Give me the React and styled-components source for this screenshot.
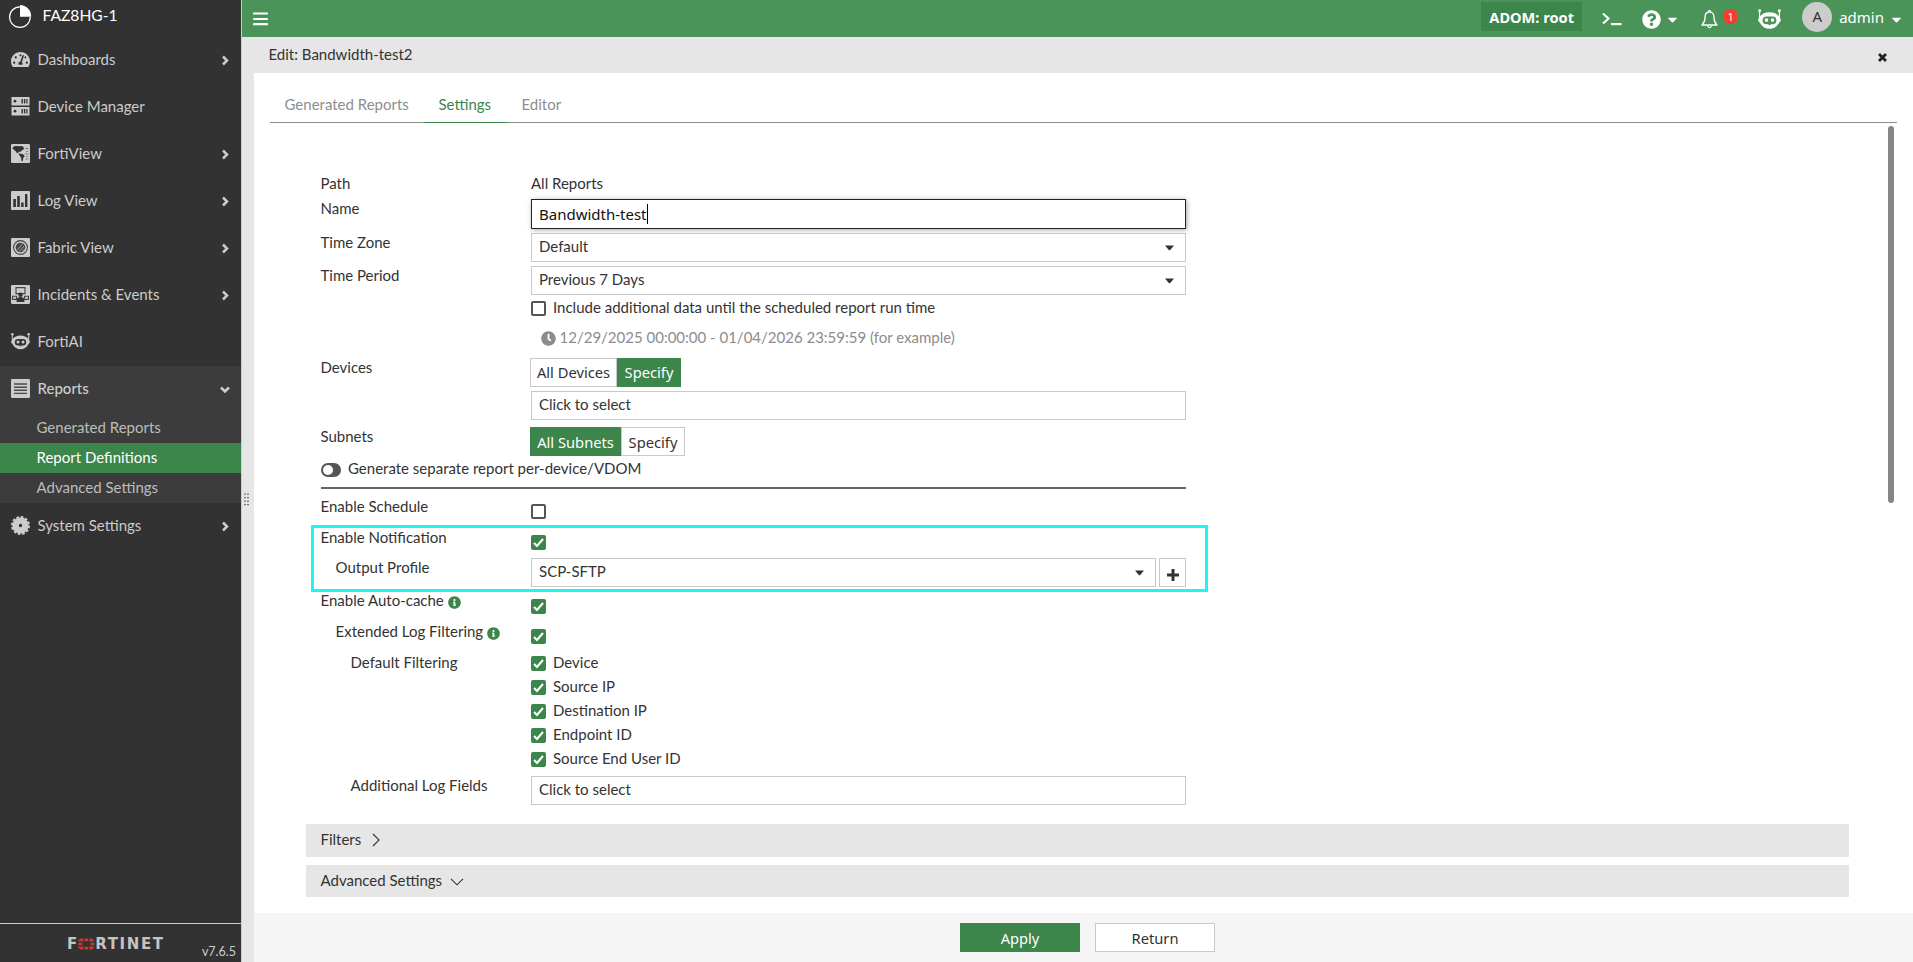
import React from 'react';
import styled, { createGlobalStyle } from 'styled-components';
import { FaTachometerAlt, FaQuestionCircle, FaCaretDown, FaClock, FaInfoCircle } from 'react-icons/fa';

const GlobalStyle = createGlobalStyle`
  *, *::after { box-sizing: border-box; }
  body {
    margin: 0;
    font-family: Lato, "Noto Sans", sans-serif;
    font-size: 15px;
    line-height: 20px;
    color: #333;
    background: #fff;
    overflow: hidden;
  }
  svg { display: block; flex: none; }
`
const Page = styled.div`
  display: flex;
  width: 1913px;
  height: 962px;
`
const Sidebar = styled.nav`
  display: flex;
  flex-direction: column;
  width: 242px;
  background: #323232;
  border-right: 1px solid #ccc;
  color: #ccc;
`
const Brand = styled.div`
  display: flex;
  height: 37px;
  padding: 5px 0 0 8px;
  color: #fff;
  font-size: 15.6px;
  gap: 10.5px;
`
const MenuGroup = styled.div`
  background: ${props => props.$open ? '#3c3c3c' : 'transparent'};
`
const MenuRow = styled.div`
  display: flex;
  align-items: center;
  height: 47px;
  padding: 0 11px 2px 11px;
  gap: 8px;
  font-weight: ${props => props.$open ? 500 : 400};
`
const MenuText = styled.span`
  flex: 1;
  margin: 0 0 2px -0.5px;
  white-space: nowrap;
`
const SubItem = styled.div`
  height: 30px;
  padding: 4px 0 0 36.5px;
  background: ${props => props.$active ? '#3c854b' : 'transparent'};
  color: ${props => props.$active ? '#fff' : '#bdbdbd'};
`
const SidebarFooter = styled.div`
  display: flex;
  align-items: flex-start;
  justify-content: space-between;
  height: 39px;
  margin-top: auto;
  padding: 12px 5px 0 67px;
  border-top: 1px solid #ccc;
  font-size: 12.5px;
`
const Logo = styled.div`
  display: flex;
  align-items: center;
  height: 16px;
  font: bold 15px/16px "DejaVu Sans", sans-serif;
  color: #c4c4c4;
`
const LogoTail = styled.span`
  letter-spacing: 1.6px;
`
const Version = styled.span`
  margin-top: 6px;
`
const Splitter = styled.div`
  display: flex;
  align-items: flex-start;
  justify-content: flex-start;
  width: 12px;
  padding: 456px 0 0 2px;
  background: #e6e6e6;
`
const Right = styled.div`
  display: flex;
  flex-direction: column;
  flex: 1;
`
const Body = styled.div`
  display: flex;
  flex: 1;
`
const TopBar = styled.header`
  display: flex;
  align-items: flex-start;
  height: 37px;
  padding: 2px 9px 0 11px;
  background: #4b9459;
  color: #fff;
  font-family: "Noto Sans", sans-serif;
`
const TopSlot = styled.div`
  display: flex;
  align-items: center;
  height: 30px;
  margin-left: ${props => props.$gap}px;
  margin-top: ${props => props.$top || 0}px;
`
const Adom = styled.div`
  width: 101px;
  height: 29px;
  margin-left: auto;
  background: #3c854b;
  font-weight: 700;
  font-size: 14.6px;
  line-height: 30px;
  text-align: center;
`
const Badge = styled.span`
  width: 15px;
  height: 15px;
  margin: -5px 0 0 5px;
  border-radius: 50%;
  background: #fa3c28;
  font: 11px/15px "Noto Sans", sans-serif;
  text-align: center;
`
const Avatar = styled.span`
  width: 30px;
  height: 30px;
  border-radius: 50%;
  background: #ccc;
  color: #333;
  line-height: 28px;
  text-align: center;
`
const TitleBar = styled.div`
  display: flex;
  justify-content: space-between;
  height: 36px;
  margin-left: -12px;
  padding: 7px 26px 0 26.5px;
  background: #e6e6e6;
`
const Content = styled.main`
  display: flex;
  flex-direction: column;
  flex: 1;
  background: #fff;
`
const Tabs = styled.div`
  display: flex;
  align-items: flex-end;
  height: 50px;
  margin: 0 16px;
  border-bottom: 1px solid #8c8c8c;
`
const Tab = styled.div`
  width: ${props => props.$w}px;
  height: 30px;
  margin-bottom: -1px;
  padding: 1px 0 0 14.5px;
  white-space: nowrap;
  color: ${props => props.$active ? '#3c854b' : '#8e8e8e'};
  border-bottom: 1px solid ${props => props.$active ? '#3c854b' : '#8c8c8c'};
  &:last-child { padding-left: 13.5px; }
`
const Scroller = styled.div`
  display: flex;
  justify-content: space-between;
  height: 790px;
`
const Panels = styled.div`
  width: 1543px;
  margin-left: 52px;
  padding-top: 50px;
`
const Thumb = styled.div`
  width: 6px;
  height: 377px;
  margin: 3px 19px 0 0;
  border-radius: 3px;
  background: #868686;
`
const Form = styled.div`
  width: 865px;
  margin-left: 15px;
`
const Row = styled.div`
  display: flex;
  height: ${props => props.$h}px;
`
const Label = styled.div`
  display: flex;
  gap: 4px;
  width: 210.5px;
  margin-left: -0.5px;
  padding-left: ${props => (props.$level || 0) * 15}px;
  white-space: nowrap;
`
const Field = styled.div`
  display: flex;
  flex: 1;
  align-items: flex-start;
  gap: ${props => props.$gap || 0}px;
  padding-top: ${props => props.$top || 0}px;
`
const Box = styled.div`
  display: flex;
  flex: 1;
  justify-content: space-between;
  height: 29px;
  padding: 2px 11px 0 7px;
  border: 1px solid #c8c8c8;
  background: #fff;
`
const FocusBox = styled(Box)`
  justify-content: flex-start;
  height: 30px;
  padding-top: 4px;
  border-color: #222;
  box-shadow: 1px 1px 5px rgba(0, 0, 0, 0.35);
  color: #111;
  font-family: "Noto Sans", sans-serif;
`
const Caret = styled.span`
  width: 1px;
  height: 20px;
  background: #000;
`
const PlusButton = styled.div`
  width: 27px;
  height: 29px;
  padding: 10px 0 0 7px;
  border: 1px solid #c8c8c8;
`
const Check = styled.span`
  display: block;
  flex: none;
  width: 15px;
  height: 15px;
  margin-top: ${props => props.$top || 0}px;
  border: 2px solid ${props => props.$on ? '#3c854b' : '#555'};
  border-radius: 2px;
  background: ${props => props.$on ? '#3c854b' : '#fff'};
`
const Option = styled.div`
  display: flex;
  height: 24px;
  gap: 7px;
`
const Options = styled.div`
  display: flex;
  flex-direction: column;
`
const Muted = styled.span`
  color: #8c8c8c;
`
const Segments = styled.div`
  display: flex;
  margin-left: -1px;
  line-height: ${props => props.$line}px;
`
const Segment = styled.div`
  width: ${props => props.$w}px;
  height: 29px;
  border: 1px solid ${props => props.$on ? '#3c854b' : '#c8c8c8'};
  background: ${props => props.$on ? '#3c854b' : '#fff'};
  color: ${props => props.$on ? '#fff' : '#333'};
  font-family: "Noto Sans", sans-serif;
  font-size: 14.7px;
  text-align: center;
  white-space: nowrap;
`
const Toggle = styled.span`
  width: 20px;
  height: 14px;
  margin: 5px 7px 0 0;
  padding: 2px;
  border-radius: 7px;
  background: #555;
  &::after {
    content: '';
    display: block;
    width: 10px;
    height: 10px;
    border-radius: 50%;
    background: #fff;
  }
`
const Rule = styled.div`
  height: 2px;
  margin-bottom: 7px;
  background: #666;
`
const Highlight = styled.div`
  position: relative;
  &::after {
    content: '';
    position: absolute;
    top: -2px;
    left: -10px;
    width: 897px;
    height: 67px;
    border: 3px solid #1ef5f5;
  }
`
const Section = styled.div`
  display: flex;
  gap: ${props => props.$gap}px;
  height: ${props => props.$h}px;
  margin-bottom: 8px;
  padding: 5px 0 0 14.5px;
  background: #e6e6e6;
`
const Footer = styled.footer`
  display: flex;
  justify-content: center;
  gap: 15px;
  flex: 1;
  padding: 10px 0 0 8px;
  background: #f5f5f5;
`
const Button = styled.div`
  width: 120px;
  height: 29px;
  border: 1px solid ${props => props.$primary ? '#3c854b' : '#c8c8c8'};
  background: ${props => props.$primary ? '#3c854b' : '#fff'};
  color: ${props => props.$primary ? '#fff' : '#333'};
  font: 14.7px/28px "Noto Sans", sans-serif;
  text-align: center;
`
const IconShift = styled.span`
  margin-top: ${props => props.$top}px;
  margin-left: ${props => props.$left || 0}px;
`

const ServerIcon = () => (
  <svg width="19" height="19" viewBox="0 0 19 19">
    <path d="M.5 0h18v8.5H.5zM.5 10h18v8.5H.5z" fill="#ccc" />
    <g fill="#323232">
      <circle cx="4" cy="4.2" r="1.4" /><circle cx="4" cy="14.2" r="1.4" />
      <path d="M10.5 2h1.4v4.6h-1.4zM12.9 2h1.4v4.6h-1.4zM15.3 2h1.2v4.6h-1.2zM10.5 12h1.4v4.6h-1.4zM12.9 12h1.4v4.6h-1.4zM15.3 12h1.2v4.6h-1.2z" />
    </g>
  </svg>
)
const Tile = ({ children }) => (
  <svg width="19" height="19" viewBox="0 0 19 19">
    <rect width="19" height="19" rx="1.2" fill="#ccc" />
    {children}
  </svg>
)
const MapIcon = () => (
  <Tile>
    <path d="M1.5 3.5 4 2l5 .3 2-.3 2 1.8-.5 1.7-2 1-1 1.5-2-.4-.3 1.3 2 .8 3 .6 1.5 1.8-1.4 2-.6 3.2-1.3-.6-.3-3.2-1.7-2-.4-1.8-2.5-1.2L4 6.5 1.8 5z" fill="#323232" />
    <path d="M14.5 4.5h2.8M15.5 7.5h1.8M14.5 10h2.8M15.5 12.5h1.8M15 15h2.3" stroke="#555" strokeWidth="1" strokeDasharray="1.2 .7" />
  </Tile>
)
const BarsIcon = () => (
  <Tile>
    <path d="M2.3 8h2.6v8H2.3zM6.2 5h2.6v11H6.2zM10.2 11.5h2.4V16h-2.4zM14 3h2.4v13H14z" fill="#323232" />
  </Tile>
)
const FabricIcon = () => (
  <Tile>
    <circle cx="9.5" cy="9.5" r="6.9" fill="none" stroke="#444" strokeWidth="1.1" />
    <circle cx="9.5" cy="9.5" r="4.8" fill="#444" />
    <path d="m6.5 12 5-6.5M8.5 13.5l4.5-5.5M11.5 13.5l2-2.5" stroke="#bbb" strokeWidth=".8" />
  </Tile>
)
const IncidentIcon = () => (
  <Tile>
    <path d="M5 2.6h9v6H5zM1.5 11.2h4v3.2h-4zM13.5 11.2h4v3.2h-4z" fill="none" stroke="#444" strokeWidth="1.1" />
    <circle cx="9.5" cy="9.7" r="2.2" fill="#323232" />
    <path d="M5.6 17v-2.2q.5-2.8 3.9-2.8t3.9 2.8V17z" fill="#323232" />
  </Tile>
)
const ReportIcon = () => (
  <Tile>
    <path d="M3 5h13M3 8.2h13M3 11.3h13M3 14.4h13" stroke="#4a4a4a" strokeWidth="1.4" />
  </Tile>
)
const Robot = ({ size = 19, color = '#ccc', eye = '#323232' }) => (
  <svg width={size} height={size} viewBox="0 0 19 19">
    <path d="M1.3 2v6M17.7 2v6" stroke={color} strokeWidth="1" />
    <circle cx="1.4" cy="2.3" r="1.2" fill={color} />
    <circle cx="17.6" cy="2.3" r="1.2" fill={color} />
    <path d="M1.3 7.2C3.5 4.8 6 3.6 9.5 3.6s6 1.2 8.2 3.6c.8 1.3 1.2 2.3 1.2 3.4-.6.8-1.2 1.4-1.9 2.2-1.5 3-4.2 4.4-7.5 4.4S3.5 15.8 2 12.8C1.3 12 .7 11.4.1 10.6.1 9.500.5 8.500 1.300 7.200z" fill={color} />
    <rect x="3.8" y="7" width="11.4" height="6.400" rx="3.200" fill={eye} />
    <circle cx="7" cy="10" r="1.5" fill={color} />
    <circle cx="12" cy="10" r="1.5" fill={color} />
    <path d="M8.3 13.2h2.4l-1.2 1.2z" fill={eye} />
  </svg>
)
const GearIcon = () => (
  <svg width="19" height="19" viewBox="0 0 19 19">
    <circle cx="9.5" cy="9.5" r="8.5" fill="none" stroke="#ccc" strokeWidth="2" strokeDasharray="2.7 1.75" />
    <circle cx="9.5" cy="9.5" r="4.9" fill="none" stroke="#ccc" strokeWidth="6.4" />
  </svg>
)
const PieIcon = () => (
  <svg width="24" height="24" viewBox="0 0 24 24">
    <path d="M12 1.8A10.3 10.3 0 1 0 22.2 12" fill="none" stroke="#fff" strokeWidth="1.2" />
    <path d="M12 0a11.5 11.5 0 0 1 11.2 11.8H12z" fill="#fff" />
  </svg>
)
const Chevron = ({ down }) => (
  <svg width="10" height="12" viewBox="0 0 10 12">
    <path d={down ? 'M1 4.5 5 8.5 9 4.5' : 'M3 2.5 7 6.5 3 10.5'} fill="none" stroke="#ccc" strokeWidth="2.5" />
  </svg>
)
const LogoMark = () => (
  <svg width="18" height="12" viewBox="0 0 18 12">
    <path d="M3.5.5h2.8v3H1.2V2.5zM7.4.5h3.7v2.7H7.400zM12.2.5H15l2 2v1h-4.800zM1.2 4.7h4v2.6h-4zM13.2 4.7h3.9v2.6h-3.9zM1.2 8.5h5.1v3H3.5l-2.3-2zM7.4 8.8h3.7v2.7H7.4zM12.2 8.5H17v1l-2 2h-2.8z" fill="#c9372c" />
  </svg>
)
const TerminalIcon = () => (
  <svg width="20" height="14" viewBox="0 0 20 14">
    <path d="m1 1.5 5.5 5L1 11.5" fill="none" stroke="#fff" strokeWidth="2.2" />
    <path d="M9 11h10.5v2.2H9z" fill="#fff" />
  </svg>
)
const BellIcon = () => (
  <svg width="17" height="19" viewBox="0 0 17 19">
    <path d="M8.5 2C5 2 4 4.8 4 7.5c0 4-1.2 5.8-3 7.5h15c-1.800-1.700-3-3.500-3-7.500C13 4.8 12 2 8.5 2z" fill="none" stroke="#fff" strokeWidth="1.3" strokeLinejoin="round" />
    <path d="M7.5 1.5a1 1 0 0 1 2 0M6.500 16q2 3.500 4 0" fill="none" stroke="#fff" strokeWidth="1.2" />
  </svg>
)
const MenuIcon = () => (
  <svg width="15" height="14" viewBox="0 0 15 14">
    <path d="M1 1.500h13M1 7h13M1 12.200h13" stroke="#fff" strokeWidth="2.2" strokeLinecap="round" />
  </svg>
)
const CloseIcon = () => (
  <svg width="9" height="9" viewBox="0 0 9 9">
    <path d="m1 1 7 7M8 1 1 8" stroke="#222" strokeWidth="2.8" />
  </svg>
)
const SelectArrow = () => (
  <svg width="9" height="6" viewBox="0 0 9 6">
    <path d="M0 .5h9L5.2 5q-.7.7-1.4 0z" fill="#333" />
  </svg>
)
const ThinChevron = ({ down }) => (
  <svg width={down ? 14 : 8} height={down ? 8 : 14} viewBox={down ? '0 0 14 8' : '0 0 8 14'}>
    <path d={down ? 'm1 .8 6 6 6-6' : 'm1 1 6 6-6 6'} fill="none" stroke="#333" strokeWidth="1.1" />
  </svg>
)
const Grip = () => (
  <svg width="5" height="13" viewBox="0 0 5 13">
    <path d="M1 .5v12M4 .5v12" stroke="#333" strokeWidth="1.3" strokeDasharray="1.3 2.2" />
  </svg>
)

const Checkbox = ({ on, top }) => (
  <Check $on={on} $top={top}>
    {on && (
      <svg width="11" height="11" viewBox="0 0 11 11">
        <path d="m1 6 3 3 6-7" fill="none" stroke="#fff" strokeWidth="2.1" />
      </svg>
    )}
  </Check>
)
const Select = ({ value }) => (
  <Box>
    {value}
    <IconShift $top={9}><SelectArrow /></IconShift>
  </Box>
)
const Info = () => <IconShift $top={6}><FaInfoCircle size={13} color="#3c854b" /></IconShift>

const menu = [
  { text: 'Dashboards', icon: <FaTachometerAlt size={19} />, arrow: true },
  { text: 'Device Manager', icon: <ServerIcon /> },
  { text: 'FortiView', icon: <MapIcon />, arrow: true },
  { text: 'Log View', icon: <BarsIcon />, arrow: true },
  { text: 'Fabric View', icon: <FabricIcon />, arrow: true },
  { text: 'Incidents & Events', icon: <IncidentIcon />, arrow: true },
  { text: 'FortiAI', icon: <Robot /> },
  { text: 'Reports', icon: <ReportIcon />, arrow: true, items: ['Generated Reports', 'Report Definitions', 'Advanced Settings'] },
  { text: 'System Settings', icon: <GearIcon />, arrow: true },
]
const filters = ['Device', 'Source IP', 'Destination IP', 'Endpoint ID', 'Source End User ID']

const SideMenu = () => (
  <Sidebar>
    <Brand><PieIcon /><IconShift $top={0}>FAZ8HG-1</IconShift></Brand>
    {menu.map(entry => (
      <MenuGroup key={entry.text} $open={!!entry.items}>
        <MenuRow $open={!!entry.items}>
          {entry.icon}
          <MenuText>{entry.text}</MenuText>
          {entry.arrow && <Chevron down={!!entry.items} />}
        </MenuRow>
        {entry.items && entry.items.map(item => (
          <SubItem key={item} $active={item === 'Report Definitions'}>{item}</SubItem>
        ))}
      </MenuGroup>
    ))}
    <SidebarFooter>
      <Logo>F<LogoMark /><LogoTail>RTINET</LogoTail></Logo>
      <Version>v7.6.5</Version>
    </SidebarFooter>
  </Sidebar>
)

const Header = () => (
  <TopBar>
    <TopSlot $gap={0} $top={2}><MenuIcon /></TopSlot>
    <Adom>ADOM: root</Adom>
    <TopSlot $gap={20} $top={2}><TerminalIcon /></TopSlot>
    <TopSlot $gap={20} $top={2}><FaQuestionCircle size={19} /></TopSlot>
    <TopSlot $gap={4} $top={2}><FaCaretDown size={15} /></TopSlot>
    <TopSlot $gap={21} $top={2}><BellIcon /><Badge>1</Badge></TopSlot>
    <TopSlot $gap={20} $top={2}><Robot size={23} color="#fff" eye="#4b9459" /></TopSlot>
    <TopSlot $gap={21}><Avatar>A</Avatar></TopSlot>
    <TopSlot $gap={7}>admin</TopSlot>
    <TopSlot $gap={5} $top={2}><FaCaretDown size={15} /></TopSlot>
  </TopBar>
)

const SettingsForm = () => (
  <Form>
    <Row $h={25}><Label>Path</Label><Field>All Reports</Field></Row>
    <Row $h={34}>
      <Label>Name</Label>
      <Field $top={1}><FocusBox>Bandwidth-test<Caret /></FocusBox></Field>
    </Row>
    <Row $h={33}><Label>Time Zone</Label><Field $top={1}><Select value="Default" /></Field></Row>
    <Row $h={32}><Label>Time Period</Label><Field $top={1}><Select value="Previous 7 Days" /></Field></Row>
    <Row $h={30}>
      <Label />
      <Field $gap={7}><Checkbox top={4} />Include additional data until the scheduled report run time</Field>
    </Row>
    <Row $h={30}>
      <Label />
      <Field $gap={3.5}>
        <IconShift $top={4} $left={10}><FaClock size={15} color="#8c8c8c" /></IconShift>
        <Muted>12/29/2025 00:00:00 - 01/04/2026 23:59:59 (for example)</Muted>
      </Field>
    </Row>
    <Row $h={33}>
      <Label>Devices</Label>
      <Field $top={1}>
        <Segments $line={26}><Segment $w={87}>All Devices</Segment><Segment $w={64} $on>Specify</Segment></Segments>
      </Field>
    </Row>
    <Row $h={36}><Label /><Field $top={1}><Box>Click to select</Box></Field></Row>
    <Row $h={32}>
      <Label>Subnets</Label>
      <Field $top={1}>
        <Segments $line={28}><Segment $w={91} $on>All Subnets</Segment><Segment $w={64}>Specify</Segment></Segments>
      </Field>
    </Row>
    <Row $h={29}><Toggle />Generate separate report per-device/VDOM</Row>
    <Rule />
    <Row $h={31}><Label>Enable Schedule</Label><Checkbox top={8} /></Row>
    <Highlight>
      <Row $h={30}><Label>Enable Notification</Label><Checkbox on top={8} /></Row>
      <Row $h={33}>
        <Label $level={1}>Output Profile</Label>
        <Field $top={1} $gap={3}>
          <Select value="SCP-SFTP" />
          <PlusButton>
            <svg width="12" height="12" viewBox="0 0 12 12">
              <path d="M6 0v12M0 6h12" stroke="#333" strokeWidth="3" />
            </svg>
          </PlusButton>
        </Field>
      </Row>
    </Highlight>
    <Row $h={31}><Label>Enable Auto-cache<Info /></Label><Checkbox on top={9} /></Row>
    <Row $h={31}><Label $level={1}>Extended Log Filtering<Info /></Label><Checkbox on top={8} /></Row>
    <Row $h={123}>
      <Label $level={2}>Default Filtering</Label>
      <Options>
        {filters.map(name => <Option key={name}><Checkbox on top={4} />{name}</Option>)}
      </Options>
    </Row>
    <Row $h={49}>
      <Label $level={2}>Additional Log Fields</Label>
      <Field $top={1}><Box>Click to select</Box></Field>
    </Row>
  </Form>
)

const App = () => (
  <Page>
    <GlobalStyle />
    <SideMenu />
    <Right>
      <Header />
      <Body>
        <Splitter><Grip /></Splitter>
        <Content>
          <TitleBar>Edit: Bandwidth-test2<IconShift $top={9}><CloseIcon /></IconShift></TitleBar>
          <Tabs>
            <Tab $w={154}>Generated Reports</Tab>
            <Tab $w={84} $active>Settings</Tab>
            <Tab $w={70}>Editor</Tab>
          </Tabs>
          <Scroller>
            <Panels>
              <SettingsForm />
              <Section $h={33} $gap={11}>Filters<IconShift $top={4}><ThinChevron /></IconShift></Section>
              <Section $h={32} $gap={8}>Advanced Settings<IconShift $top={8}><ThinChevron down /></IconShift></Section>
            </Panels>
            <Thumb />
          </Scroller>
          <Footer>
            <Button $primary>Apply</Button>
            <Button>Return</Button>
          </Footer>
        </Content>
      </Body>
    </Right>
  </Page>
)

export default App;
